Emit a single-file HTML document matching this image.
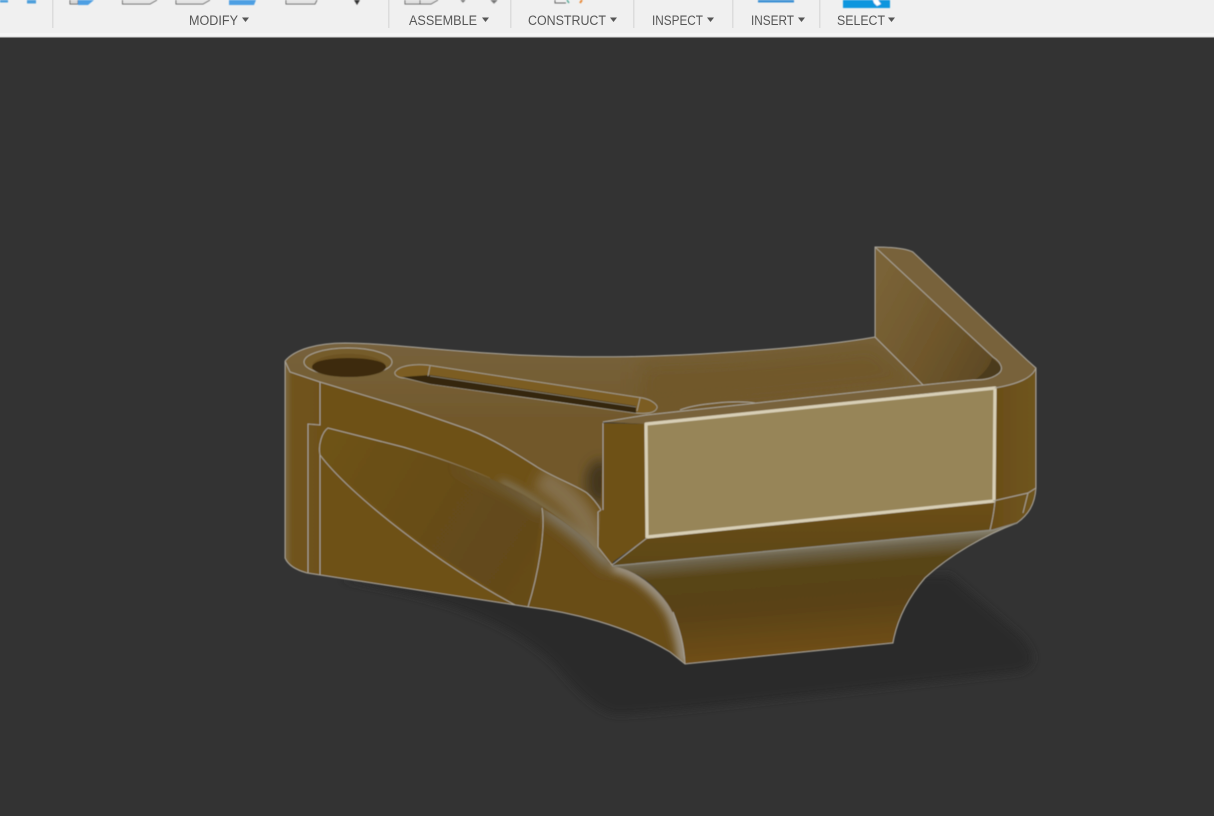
<!DOCTYPE html>
<html><head><meta charset="utf-8"><style>
html,body{margin:0;padding:0;width:1214px;height:816px;overflow:hidden;background:#333}
svg{display:block}
text{font-family:"Liberation Sans",Arial,sans-serif;font-size:13.5px;fill:#555;filter:url(#b3)}
</style></head><body>
<svg width="1214" height="816" viewBox="0 0 1214 816" xmlns="http://www.w3.org/2000/svg">
<defs>
<filter id="b3" x="-10%" y="-30%" width="120%" height="160%"><feGaussianBlur stdDeviation="0.35"/></filter>
<filter id="b5" x="-10%" y="-30%" width="120%" height="160%"><feGaussianBlur stdDeviation="0.6"/></filter>
<filter id="b4" x="-30%" y="-30%" width="160%" height="160%"><feGaussianBlur stdDeviation="4"/></filter>
<filter id="b6" x="-30%" y="-30%" width="160%" height="160%"><feGaussianBlur stdDeviation="6"/></filter>
<filter id="b8" x="-50%" y="-50%" width="200%" height="200%"><feGaussianBlur stdDeviation="9"/></filter>
<linearGradient id="flare" x1="800" y1="546" x2="809" y2="656" gradientUnits="userSpaceOnUse"><stop offset="0" stop-color="#86806c"/><stop offset=".07" stop-color="#6c624a"/><stop offset=".2" stop-color="#594519"/><stop offset=".55" stop-color="#5a4215"/><stop offset="1" stop-color="#714f15"/></linearGradient>
<linearGradient id="leftw" x1="285" y1="0" x2="320" y2="0" gradientUnits="userSpaceOnUse"><stop offset="0" stop-color="#7d6a45"/><stop offset=".2" stop-color="#70541f"/><stop offset="1" stop-color="#6e5119"/></linearGradient>
<linearGradient id="side" x1="320" y1="430" x2="640" y2="620" gradientUnits="userSpaceOnUse"><stop offset="0" stop-color="#6f5319"/><stop offset=".55" stop-color="#634a1a"/><stop offset="1" stop-color="#6b4d18"/></linearGradient>
<linearGradient id="wall" x1="880" y1="280" x2="1000" y2="345" gradientUnits="userSpaceOnUse"><stop offset="0" stop-color="#7a6337"/><stop offset=".55" stop-color="#6f572c"/><stop offset="1" stop-color="#5f4a24"/></linearGradient>
<linearGradient id="floor" x1="0" y1="345" x2="0" y2="420" gradientUnits="userSpaceOnUse"><stop offset="0" stop-color="#77623c"/><stop offset="1" stop-color="#72592c"/></linearGradient>
<linearGradient id="rend" x1="995" y1="0" x2="1036" y2="0" gradientUnits="userSpaceOnUse"><stop offset="0" stop-color="#6b4e18"/><stop offset="1" stop-color="#6f5520"/></linearGradient>
<linearGradient id="strip" x1="0" y1="505" x2="0" y2="570" gradientUnits="userSpaceOnUse"><stop offset="0" stop-color="#6b4e17"/><stop offset="1" stop-color="#5b4618"/></linearGradient>
<linearGradient id="fade" x1="403" y1="447" x2="490" y2="478" gradientUnits="userSpaceOnUse"><stop offset="0" stop-color="#a8a396"/><stop offset="1" stop-color="#a8a396" stop-opacity=".15"/></linearGradient>
<linearGradient id="hi" x1="450" y1="465" x2="545" y2="510" gradientUnits="userSpaceOnUse"><stop offset="0" stop-color="#7f7766" stop-opacity="0"/><stop offset="1" stop-color="#7f7766"/></linearGradient>
<clipPath id="cTop"><path d="M285 361C295 349 318 343 345 343C385 343 440 351 520 355C590 358 640 357 700 354C770 350 830 345 875 337L923 385L646 424L603 422L601 510Q595 500 587 493C575 485 555 478 537 467C515 453 495 440 470 430C450 423 430 416 403 407L320 382L290 372Z"/></clipPath>
<clipPath id="cBand"><path d="M320 382L403 407C430 416 450 423 470 430C495 440 515 453 537 467C555 478 575 485 587 493Q595 500 601 510L598 547L613 565Q600 555 587 540C575 530 560 518 543 507C527 496 510 487 487 477C460 465 430 455 403 447L328 428Z"/></clipPath>
<clipPath id="cSwoop"><path d="M613 565C640 572 660 590 673 612C680 630 684 645 685 664L670 652C625 625 570 612 528 607L542 508C560 518 575 530 587 540Q600 555 613 565Z"/></clipPath>
<clipPath id="cFlare"><path d="M612 566L993 530L1017 523C985 535 950 555 925 578C908 598 897 620 893 643L685 664C684 640 678 618 665 600C652 582 635 570 612 566Z"/></clipPath>
<clipPath id="cLens"><path d="M328 428L403 447C430 455 460 465 487 477C510 487 527 496 543 507C546 530 538 575 528 607L515 605C470 575 420 545 380 510C350 482 330 470 320 455C318 445 322 432 328 428Z"/></clipPath>
</defs>

<rect width="1214" height="816" fill="#333333"/>

<!-- shadow -->
<path d="M340 580C420 595 500 612 555 665C580 695 595 708 612 714C640 716 720 705 1020 672C1040 665 1034 650 1020 635L950 575Z" fill="#2b2b2b" filter="url(#b4)"/>

<!-- toolbar -->
<rect width="1214" height="33" fill="#f0f0f0"/>
<rect y="33" width="1214" height="4" fill="#f5f5f5"/>
<rect y="36.500" width="1214" height="1" fill="#d8d8d8"/>
<g fill="#dcdcdc"><rect x="52" y="0" width="1.500" height="28"/><rect x="388" y="0" width="1.500" height="28"/><rect x="510" y="0" width="1.500" height="28"/><rect x="633" y="0" width="1.500" height="28"/><rect x="732" y="0" width="1.500" height="28"/><rect x="819" y="0" width="1.500" height="28"/></g>
<g filter="url(#b5)">
<rect x="0" y="0" width="8" height="2.500" fill="#4d9fdc"/><rect x="27" y="0" width="9" height="3.500" fill="#4d9fdc"/>
<path d="M70 0V4H78V0" fill="#d8d8d8" stroke="#666"/><path d="M78 0V5H88L94 0Z" fill="#4d9fe3"/>
<path d="M122.500 0V4H150L157 0" fill="#e4e4e4" stroke="#666"/>
<path d="M176 0V4H203L210 0" fill="#e4e4e4" stroke="#666"/>
<path d="M229 0V5H254L256 0Z" fill="#4d9fe3"/>
<path d="M286 0V4H315L317 0" fill="#e4e4e4" stroke="#666"/>
<path d="M354 0H360L357 5Z" fill="#333"/>
<path d="M405 0V4H431L438 0" fill="#e0e0e0" stroke="#666"/><path d="M420 0V4" stroke="#666"/>
<path d="M461 0L463 2L465 0M491 0L494 3L497 0" fill="#777" stroke="#777"/>
<path d="M555 0V3H566" fill="none" stroke="#666"/><path d="M567 0L569 3" stroke="#5a9" stroke-width="1.500"/><path d="M582 0L580 3" stroke="#e88a3a" stroke-width="2"/>
<rect x="758" y="0" width="36" height="2.500" fill="#3b8fd4"/>
<rect x="843" y="0" width="47" height="8" fill="#0a96de"/><path d="M873 0L878 0L881 4L877 6L874 3Z" fill="#fff"/>
</g>
<text x="189" y="25" textLength="49" lengthAdjust="spacingAndGlyphs">MODIFY</text><path d="M242 17.500H249L245.500 22Z" fill="#555"/>
<text x="409" y="25" textLength="68" lengthAdjust="spacingAndGlyphs">ASSEMBLE</text><path d="M482 17.500H489L485.500 22Z" fill="#555"/>
<text x="528" y="25" textLength="78" lengthAdjust="spacingAndGlyphs">CONSTRUCT</text><path d="M610 17.500H617L613.500 22Z" fill="#555"/>
<text x="652" y="25" textLength="51" lengthAdjust="spacingAndGlyphs">INSPECT</text><path d="M707 17.500H714L710.500 22Z" fill="#555"/>
<text x="751" y="25" textLength="43" lengthAdjust="spacingAndGlyphs">INSERT</text><path d="M798 17.500H805L801.500 22Z" fill="#555"/>
<text x="837" y="25" textLength="48" lengthAdjust="spacingAndGlyphs">SELECT</text><path d="M888 17.500H895L891.500 22Z" fill="#555"/>

<g filter="url(#b5)">
<!-- base silhouette -->
<path d="M285 361C295 349 318 343 345 343C385 343 440 351 520 355L603 422L613 565L673 612L685 664L670 652C625 625 570 612 528 607L320 575L307 573C296 570 288 565 285 558Z" fill="#6e5119"/>
<!-- left wall -->
<path d="M285 361L290 372L320 382V575L307 573C296 570 288 565 285 558Z" fill="url(#leftw)"/>
<!-- lens + below -->
<path d="M320 382L403 447L543 507L528 607L320 575Z" fill="#6e5119"/>
<g clip-path="url(#cLens)">
<rect x="310" y="420" width="240" height="195" fill="url(#side)"/>
<path d="M450 465C490 478 520 492 545 510" fill="none" stroke="url(#hi)" stroke-width="8" filter="url(#b6)"/>
</g>
<!-- lower swoop -->
<g clip-path="url(#cSwoop)">
<rect x="520" y="500" width="180" height="170" fill="#694d18"/>
<path d="M543 507C560 518 575 530 587 540Q600 555 613 565" fill="none" stroke="#827c6e" stroke-width="14" filter="url(#b6)"/>
<path d="M613 565C640 572 660 590 673 612C680 630 684 645 685 664" fill="none" stroke="#9a9080" stroke-width="14" filter="url(#b4)"/>
</g>
<!-- fold band -->
<g clip-path="url(#cBand)">
<rect x="300" y="370" width="320" height="210" fill="#6e5119"/>
<path d="M540 478C565 492 590 515 598 555" fill="none" stroke="#84704c" stroke-width="24" filter="url(#b6)"/>
<path d="M500 482C520 490 530 498 543 507C560 518 575 530 587 540Q600 555 613 565" fill="none" stroke="#86806e" stroke-width="5" filter="url(#b4)"/>
</g>
<!-- top surface -->
<g clip-path="url(#cTop)">
<rect x="280" y="335" width="660" height="190" fill="url(#floor)"/>
<ellipse cx="600" cy="482" rx="14" ry="22" fill="#43361f" filter="url(#b6)"/>
<path d="M640 360C720 360 800 350 875 340L920 385L640 410Z" fill="#6f5626" opacity=".6" filter="url(#b8)"/>
</g>
<!-- hole -->
<ellipse cx="348" cy="362" rx="44" ry="14" fill="#755b2c" stroke="#a8a294" stroke-width="1"/>
<ellipse cx="349" cy="367" rx="37" ry="10" fill="#3d2c0e"/>
<path d="M312 364C322 351 372 350 385 364C372 356 325 356 312 364Z" fill="#6d5224"/>
<!-- slot -->
<path d="M395 372C400 365 415 364 427 365L643 398C652 400 658 405 657 408C655 413 648 414 635 413L430 384L405 378C398 378 394 375 395 372Z" fill="#7b5d23" stroke="#a29b8b" stroke-width="1"/>
<path d="M402 377L430 375L636 406L636 413L560 402L430 384Z" fill="#36270e"/>
<path d="M430 366L428 376M640 398L637 411" stroke="#a29b8b" stroke-width="1" fill="none"/>
<path d="M430 376L636 407" stroke="#8e8775" stroke-width=".8" fill="none"/>
<!-- wall -->
<path d="M875 247L993 357C1002 363 1004 370 998 374C990 380 980 380 973 380L923 385L875 337Z" fill="url(#wall)"/>
<path d="M985 378C995 378 1002 373 1002 367L992 358C990 366 985 372 975 380Z" fill="#47381a" opacity=".8" filter="url(#b3)"/>
<!-- rim -->
<path d="M875 247C890 247 905 248 913 252L1027 360L1036 368C1036 374 1032 378 1028 380C1018 384 1005 386 995 388L930 393L646 424L603 422L646 415L923 385L973 380C985 380 998 378 1001 370C1003 364 998 360 993 357Z" fill="#78623a"/>
<!-- pillar -->
<path d="M603 423L646 424L647 538L610 564L598 547L601 510Z" fill="#6e5118"/>
<!-- strip -->
<path d="M612 566L647 538L993 501L1036 488L1028 510L1017 523L993 530Z" fill="url(#strip)"/>
<!-- right end -->
<path d="M995 388C1010 386 1030 380 1036 368V488C1035 505 1028 515 1017 523L991 530L995 501Z" fill="url(#rend)"/>
<!-- flare -->
<g clip-path="url(#cFlare)">
<rect x="600" y="520" width="430" height="150" fill="url(#flare)"/>
</g>
<!-- selected face -->
<path d="M646 424L995 388L994 501L647 537Z" fill="#978558" stroke="#d8cfb6" stroke-width="3.200" stroke-linejoin="round"/>

<!-- edges -->
<g fill="none" stroke="#a8a396" stroke-width="1">
<path d="M285 361C295 349 318 343 345 343C385 343 440 351 520 355C590 358 640 357 700 354C770 350 830 345 875 337"/>
<path d="M285 361L290 372L320 382L403 407C430 416 450 423 470 430C495 440 515 453 537 467C555 478 575 485 587 493Q595 500 601 510"/>
<path d="M285 361V558C288 565 296 570 307 573L320 575L528 607C570 612 625 625 670 652L685 664L893 643C897 620 908 598 925 578C950 555 985 535 1017 523C1028 515 1035 505 1036 488V368L1027 360L913 252C905 248 890 247 875 247V337"/>
<path d="M320 382V425L308 424V573M320 455V575"/>
<path d="M320 455C318 445 322 432 328 428L403 447"/>
<path d="M403 447C430 455 460 465 490 478" stroke="url(#fade)"/>
<path d="M320 455C350 495 440 565 515 605"/>
<path d="M542 508C546 530 538 575 528 607"/>
<path d="M603 423V510M601 510L598 512V547L612 565M612 565L647 538"/>
<path d="M603 422L646 415L923 385"/>
<path d="M875 337L923 385M875 247L993 357C1002 363 1004 370 998 374C990 380 980 380 973 380L923 385"/>
<path d="M1036 368C1032 378 1018 384 995 388"/>
<path d="M993 501L1028 493L1036 488M995 501C994 512 992 522 990 530M1028 493L1023 513"/>
<path d="M680 410C695 404 735 400 755 403"/>
<path d="M673 612C680 630 684 645 685 664"/>
<path d="M612 566L993 530L1017 523" stroke="#8e8b80" stroke-width="1.200"/>
</g>
</g>
</svg>
</body></html>
